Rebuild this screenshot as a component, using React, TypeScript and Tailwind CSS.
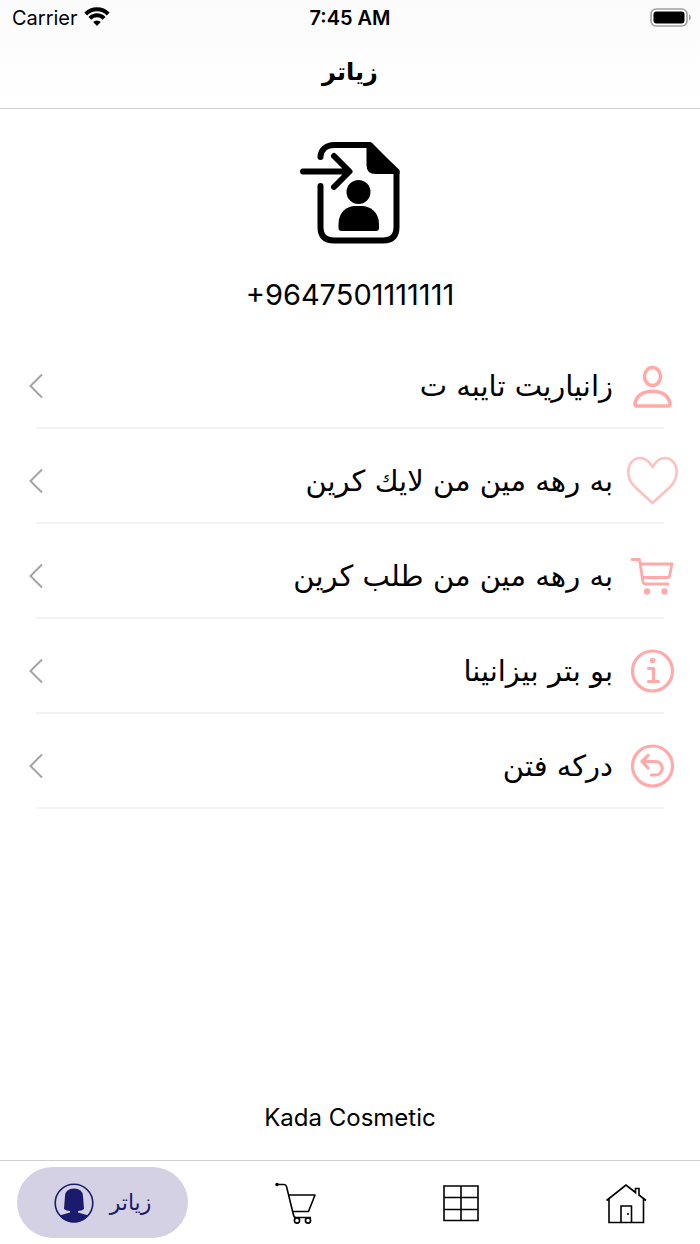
import type { ReactNode } from "react";

interface MenuItem {
  label: string;
  href: string;
  icon: ReactNode;
}

function WifiIcon() {
  return (
    <svg width="26" height="22" viewBox="0 1 26 22" fill="none" stroke="black" strokeWidth="4">
      <path d="M1.8 8a15.800 15.800 0 0 1 22.400 0" />
      <path d="M5.900 12.300a10 10 0 0 1 14.200 0" />
      <path d="M13 20l-3.800-3.900a5.400 5.400 0 0 1 7.600 0z" fill="black" stroke="none" />
    </svg>
  );
}

function BatteryIcon() {
  return (
    <svg width="42" height="20" viewBox="0 0 42 20">
      <rect x="1" y="1" width="36" height="17" rx="5" fill="white" stroke="#a0a0a0" strokeWidth="1.600" />
      <rect x="3.500" y="3.500" width="31" height="12" rx="3" fill="black" />
      <path d="M39 6.500c2.400 1 2.400 5 0 6z" fill="#a0a0a0" />
    </svg>
  );
}

function LoginIcon() {
  return (
    <svg width="102" height="104" viewBox="-1 0 102 104" fill="none" stroke="black" strokeWidth="6" strokeLinecap="round" strokeLinejoin="round">
      <path d="M20.500 16V15C21.500 8 27 4 34 4H70L96.500 31V86Q96.500 99.500 83 99.500H34Q20.500 99.500 20.500 86V45" />
      <path d="M3 30.500H49M34 15L49.500 30.500L34 46" />
      <path d="M66.500 2H71L99.500 29V33H75.500Q66.500 33 66.500 24Z" fill="black" stroke="none" />
      <circle cx="58.500" cy="51" r="12" fill="black" stroke="none" />
      <path d="M38.500 87V83C38.500 71 47 65 55 65H62C70 65 79 71 79 83V87Q79 90 76 90H41.500Q38.500 90 38.500 87Z" fill="black" stroke="none" />
    </svg>
  );
}

function PersonIcon() {
  return (
    <svg width="52" height="52" viewBox="0 0 52 52" fill="none" stroke="#ffaaa8" strokeWidth="3.500" strokeLinejoin="round">
      <ellipse cx="25.500" cy="16.500" rx="8" ry="9" />
      <path d="M8 43.500c1-7.500 8-12.300 17.500-12.300S42 36 43 43.500q.3 2.500-2 2.500h-31q-2.300 0-2-2.500z" />
    </svg>
  );
}

function HeartIcon() {
  return (
    <svg width="52" height="52" viewBox="0 0 52 52" fill="none" stroke="#ffc0be" strokeWidth="2.600" strokeLinejoin="round">
      <path d="M25.500 12C22 6 18 3 13 3C6 3 1.300 9.500 1.300 17C1.300 23.500 4.500 28.500 8.500 32.500L25.500 48L42.500 32.500C46.500 28.500 49.700 23.500 49.700 17C49.700 9.500 45 3 38 3C33 3 29 6 25.500 12Z" />
    </svg>
  );
}

function PinkCartIcon() {
  return (
    <svg width="52" height="52" viewBox="0 0 52 52" fill="none" stroke="#ffaaa8" strokeWidth="2.800" strokeLinecap="round" strokeLinejoin="round">
      <path d="M5 9.500H12.500L16 32Q16.500 34 18.500 34H41" />
      <path d="M13.500 14H45L42.500 26Q42.300 27.500 40.500 27.500H16" />
      <circle cx="20" cy="41.500" r="3.200" fill="#ffaaa8" stroke="none" />
      <circle cx="37.500" cy="41.500" r="3.200" fill="#ffaaa8" stroke="none" />
    </svg>
  );
}

function InfoIcon() {
  return (
    <svg width="52" height="52" viewBox="0 0 52 52" fill="none" stroke="#ffaaa8" strokeWidth="3.200" strokeLinecap="round" strokeLinejoin="round">
      <circle cx="25.500" cy="26" r="20" />
      <circle cx="25.500" cy="15.500" r="2.800" fill="#ffaaa8" stroke="none" />
      <path d="M21.500 23.500H26.500V36M21.500 36.500H31.500" />
    </svg>
  );
}

function BackIcon() {
  return (
    <svg width="52" height="52" viewBox="0 0 52 52" fill="none" stroke="#ffaaa8" strokeWidth="3.200" strokeLinecap="round" strokeLinejoin="round">
      <circle cx="25.500" cy="26" r="20" />
      <path d="M21 15.500L15 21.500L21 28M15.500 21.500H28.500a6.700 6.700 0 0 1 0 13.500H24.500" />
    </svg>
  );
}

function ChevronIcon() {
  return (
    <svg width="14" height="26" viewBox="0 0 14 26" fill="none" stroke="#a3a3a3" strokeWidth="2">
      <path d="M13 1.500L1.500 13L13 24.500" />
    </svg>
  );
}

function ProfileIcon() {
  return (
    <svg width="40" height="40" viewBox="0 0 40 40" fill="#1b1b6d">
      <circle cx="20" cy="20" r="18.800" fill="none" stroke="#1b1b6d" strokeWidth="1.600" />
      <path d="M10 26L11 13Q11.500 5.500 20 5.500T29 13L30 26Q28 28 24 28V29.500L34.500 32.500C30.500 38 25 39.500 20 39.500S9.500 38 5.500 32.500L16 29.500V28Q12 28 10 26Z" />
    </svg>
  );
}

function CartIcon() {
  return (
    <svg width="42" height="42" viewBox="0 0 42 42" fill="none" stroke="black" strokeWidth="1.600" strokeLinejoin="round">
      <path d="M2 2.500H9Q11 2.500 11.500 4.500L18.500 33Q19 35.500 21 35.500H36M13.500 13H40L33.500 29.500H17.500" />
      <circle cx="2" cy="2.500" r="1.700" fill="black" stroke="none" />
      <circle cx="22" cy="38.500" r="2.600" fill="white" />
      <circle cx="33" cy="38.500" r="2.600" fill="white" />
    </svg>
  );
}

function GridIcon() {
  return (
    <svg width="38" height="38" viewBox="0 0 38 38" fill="none" stroke="black" strokeWidth="1.600">
      <path d="M2 2H36V36.500H2ZM19 2V36.500M2 13.500H36M2 25.500H36" />
    </svg>
  );
}

function HomeIcon() {
  return (
    <svg width="42" height="42" viewBox="0 0 42 42" fill="none" stroke="black" strokeWidth="1.600">
      <path d="M1.500 18.500L21 3L30.500 10.500V6.500H34V13L41 18.500M4 17V40.500H38.500V17M16 40.500V24H26.500V40.500" />
      <circle cx="23" cy="32" r="1" fill="black" stroke="none" />
    </svg>
  );
}

const menuItems: MenuItem[] = [
  { label: "زانیاریت تایبه ت", href: "#profile", icon: <PersonIcon /> },
  { label: "به رهه مین من لايك كرین", href: "#liked", icon: <HeartIcon /> },
  { label: "به رهه مین من طلب كرین", href: "#orders", icon: <PinkCartIcon /> },
  { label: "بو بتر بیزانینا", href: "#about", icon: <InfoIcon /> },
  { label: "دركه فتن", href: "#logout", icon: <BackIcon /> },
];

export default function App() {
  return (
    <div className="flex min-h-screen flex-col bg-white font-['Inter','DejaVu_Sans',sans-serif] text-black">
      <header className="border-b border-[#d0d0d0] bg-linear-to-b from-[#fbfbfb] to-white">
        <div className="grid h-9 grid-cols-3 items-center text-xl">
          <div className="flex items-center gap-1.5 pl-3">
            <span>Carrier</span>
            <WifiIcon />
          </div>
          <span className="text-center font-semibold">7:45 AM</span>
          <div className="flex justify-end pr-2">
            <BatteryIcon />
          </div>
        </div>
        <h1 dir="rtl" className="flex h-18 items-center justify-center font-['DejaVu_Sans',sans-serif] text-2xl font-bold">
          زیاتر
        </h1>
      </header>

      <main className="flex flex-1 flex-col">
        <section className="flex flex-col items-center pt-8">
          <LoginIcon />
          <p className="mt-8 text-[29px] leading-9">+9647501111111</p>
        </section>

        <ul dir="rtl" className="mt-[21px]">
          {menuItems.map((item) => (
            <li key={item.href}>
              <a href={item.href} className="flex h-[93px] items-center gap-3.5 pt-2.5 pr-[21px] pl-[29px]">
                {item.icon}
                <span className="flex-1 font-['DejaVu_Sans',sans-serif] text-[29px] leading-10">{item.label}</span>
                <ChevronIcon />
              </a>
              <div className="mx-9 h-0.5 bg-[#f2f2f7]" />
            </li>
          ))}
        </ul>

        <p className="mt-auto pb-6 text-center text-2xl leading-9">Kada Cosmetic</p>
      </main>

      <nav className="flex items-center border-t border-[#d0d0d0] py-1.5 pl-[17px]">
        <a
          href="#more"
          className="flex h-[71px] w-[171px] items-center justify-center gap-4 rounded-full bg-[#d3d1e3] text-[#1b1b6d]"
        >
          <ProfileIcon />
          <span className="font-['DejaVu_Sans',sans-serif] text-[22px]">زیاتر</span>
        </a>
        <div className="flex flex-1 items-center justify-between pr-[53px] pl-[87px]">
          <a href="#cart" aria-label="Cart">
            <CartIcon />
          </a>
          <a href="#categories" aria-label="Categories">
            <GridIcon />
          </a>
          <a href="#home" aria-label="Home">
            <HomeIcon />
          </a>
        </div>
      </nav>
    </div>
  );
}
